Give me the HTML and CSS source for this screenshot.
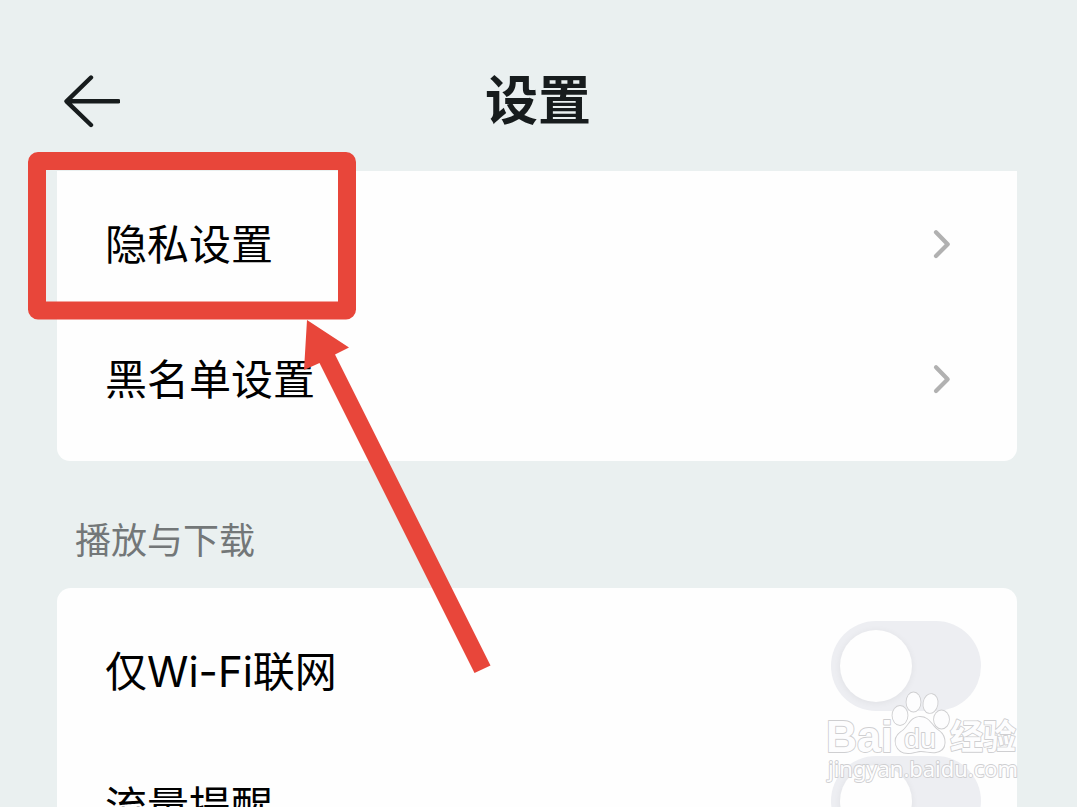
FILE: index.html
```html
<!DOCTYPE html>
<html lang="zh-CN">
<head>
<meta charset="utf-8">
<title>设置</title>
<link rel="stylesheet" href="styles.css">
</head>
<body>
<div class="screen">
  <header class="header">
    <svg class="back" width="60" height="60" viewBox="0 0 60 60"><path d="M31 6.500 6.500 30.300 31 54M7 30.300H58.500"/></svg>
    <h1 class="title">设置</h1>
  </header>
  <main class="content">
    <section class="card card-top">
      <div class="row"><span class="label">隐私设置</span><svg class="chevron" width="20" height="32" viewBox="0 0 20 32"><path d="M4 3.200 15.700 15.200 4 27"/></svg></div>
      <div class="row"><span class="label">黑名单设置</span><svg class="chevron" width="20" height="32" viewBox="0 0 20 32"><path d="M4 3.200 15.700 15.200 4 27"/></svg></div>
    </section>
    <h2 class="section-title">播放与下载</h2>
    <section class="card card-bottom">
      <div class="row row-switch"><span class="label">仅Wi-Fi联网</span><span class="switch"><span class="knob"></span></span></div>
      <div class="row row-switch"><span class="label">流量提醒</span><span class="switch"><span class="knob"></span></span></div>
    </section>
  </main>
  <svg class="overlay" width="1077" height="807" viewBox="0 0 1077 807">
    <rect class="frame" x="37" y="161" width="310" height="149.500" rx="1"/>
    <path class="pointer" d="M307 320 349 347.500 335 354.500 490.500 665.500 474.500 673 319.500 363 304 370Z"/>
    <g class="mark">
      <text class="mark-brand" x="826" y="752" textLength="67" lengthAdjust="spacingAndGlyphs">Bai</text>
      <path d="M920 717C910 717 909 727 901 732 891 739 896 753 908 753 914 753 917 751 921 751 926 751 931 753 936 752 948 750 946 736 939 731 931 726 930 717 920 717Z"/>
      <ellipse cx="900" cy="715.500" rx="7.500" ry="9.500"/>
      <ellipse cx="913.500" cy="702" rx="7" ry="9.500"/>
      <ellipse cx="930.500" cy="703.500" rx="7" ry="9.500" transform="rotate(10 930.500 703.500)"/>
      <ellipse cx="941.500" cy="719.500" rx="7.500" ry="9"/>
      <text class="mark-du" x="904" y="748" textLength="32" lengthAdjust="spacingAndGlyphs">du</text>
      <text class="mark-cn" x="950" y="749" textLength="66" lengthAdjust="spacingAndGlyphs">经验</text>
      <text class="mark-url" x="828" y="777" textLength="190" lengthAdjust="spacingAndGlyphs">jingyan.baidu.com</text>
    </g>
  </svg>
</div>
</body>
</html>
```
FILE: styles.css
```css
body {
  margin: 0;
  background: #eaf0f0;
  color: #000;
  font-family: Inter, "Noto Sans CJK SC", sans-serif;
}
.screen {
  position: relative;
  height: 807px;
  overflow: hidden;
}
.header {
  display: grid;
  grid-template-columns: 60px 1fr 60px;
  align-items: center;
  height: 171px;
  padding: 31px 61px 0 60px;
  box-sizing: border-box;
}
.back, .chevron {
  fill: none;
  stroke: #171c1d;
  stroke-width: 4.400;
  stroke-linecap: round;
  stroke-linejoin: round;
}
.title {
  margin: 0;
  color: #171c1d;
  font-size: 53px;
  font-weight: 700;
  line-height: 60px;
  text-align: center;
}
.content {
  padding: 0 60px 0 57px;
}
.card {
  background: #fefefe;
}
.card-top {
  padding: 6px 0 14px;
  border-radius: 0 0 13px 13px;
}
.card-bottom {
  padding-top: 16px;
  border-radius: 14px 14px 0 0;
}
.row {
  display: flex;
  align-items: center;
  justify-content: space-between;
  height: 135px;
  padding: 0 65px 0 48px;
}
.row-switch {
  padding-right: 36px;
}
.label {
  font-size: 42px;
  line-height: 60px;
  white-space: nowrap;
}
.chevron {
  stroke: #b1b1b1;
  stroke-width: 4.200;
}
.section-title {
  height: 127px;
  margin: 0;
  padding: 0 18px;
  box-sizing: border-box;
  color: #737778;
  font-size: 36px;
  font-weight: 400;
  line-height: 160px;
}
.switch {
  width: 150px;
  height: 90px;
  margin-bottom: 11px;
  padding: 9px;
  box-sizing: border-box;
  border-radius: 45px;
  background: #edeef2;
}
.knob {
  display: block;
  width: 72px;
  height: 72px;
  border-radius: 50%;
  background: #fefefe;
  box-shadow: 0 1px 7px rgba(0, 0, 0, .06);
}
.overlay {
  position: absolute;
  inset: 0;
}
.frame {
  fill: none;
  stroke: #e8463a;
  stroke-width: 18;
  stroke-linejoin: round;
}
.pointer {
  fill: #e8463a;
}
.mark {
  fill: #fdfdfe;
  stroke: #cfcfd1;
  stroke-width: 1.800;
  stroke-linejoin: round;
  paint-order: stroke fill;
}
.mark-brand {
  font: 700 44px "Liberation Sans", sans-serif;
}
.mark-du {
  font: 400 28px "Liberation Sans", sans-serif;
}
.mark-cn {
  font: 700 34px "Noto Sans CJK SC", sans-serif;
}
.mark-url {
  font: 400 22px "Noto Sans", sans-serif;
}
```
